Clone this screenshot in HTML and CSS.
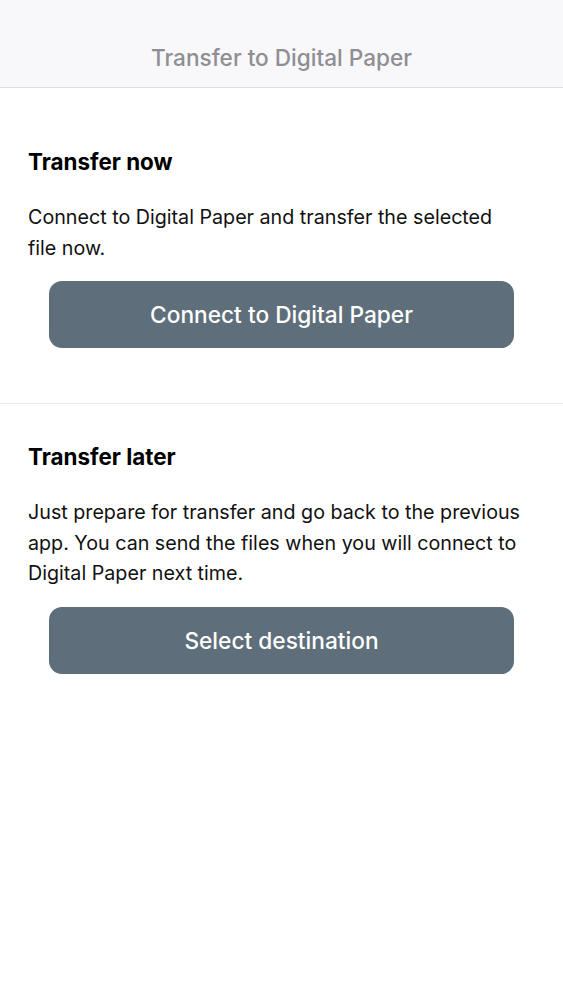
FILE: index.html
```html
<!DOCTYPE html>
<html lang="en">
<head>
<meta charset="utf-8">
<title>Transfer to Digital Paper</title>
<link rel="stylesheet" href="styles.css">
</head>
<body>
<header class="navbar">
  <h1 class="nav-title">Transfer to Digital Paper</h1>
</header>
<main>
  <section class="option option-first">
    <h2 class="option-title">Transfer now</h2>
    <p class="option-text">Connect to Digital Paper and transfer the selected file now.</p>
    <button class="action">Connect to Digital Paper</button>
  </section>
  <section class="option option-second">
    <h2 class="option-title">Transfer later</h2>
    <p class="option-text">Just prepare for transfer and go back to the previous app. You can send the files when you will connect to Digital Paper next time.</p>
    <button class="action">Select destination</button>
  </section>
</main>
</body>
</html>
```
FILE: styles.css
```css
* { box-sizing: border-box; }
html, body { margin: 0; padding: 0; background: #ffffff; }
body {
  font-family: Inter, "Liberation Sans", sans-serif;
  color: #111;
  width: 563px;
}
.navbar {
  height: 88px;
  background: #f8f7fa;
  border-bottom: 1px solid #dedde2;
  display: flex;
  align-items: flex-end;
  justify-content: center;
  padding-bottom: 15px;
}
.nav-title {
  margin: 0;
  font-size: 22.6px;
  font-weight: 500;
  line-height: 28px;
  color: #8e8e93;
}
.option {
  padding: 0 28px;
}
.option-first {
  padding-top: 61px;
  padding-bottom: 55px;
  border-bottom: 1px solid #e9e9ec;
}
.option-second {
  padding-top: 40px;
}
.option-title {
  margin: 0;
  font-size: 22.4px;
  font-weight: 700;
  line-height: 26px;
  color: #000;
}
.option-text {
  max-width: 494px;
  margin: 27px 0 18px;
  font-size: 19.7px;
  line-height: 30.5px;
  color: #111;
}
.action {
  display: flex;
  align-items: center;
  justify-content: center;
  width: 465px;
  height: 67px;
  margin: 0 0 0 21px;
  border: none;
  border-radius: 13px;
  background: #5e6e7a;
  color: #fff;
  font-family: Inter, "Liberation Sans", sans-serif;
  font-size: 22.7px;
  font-weight: 500;
}
```
